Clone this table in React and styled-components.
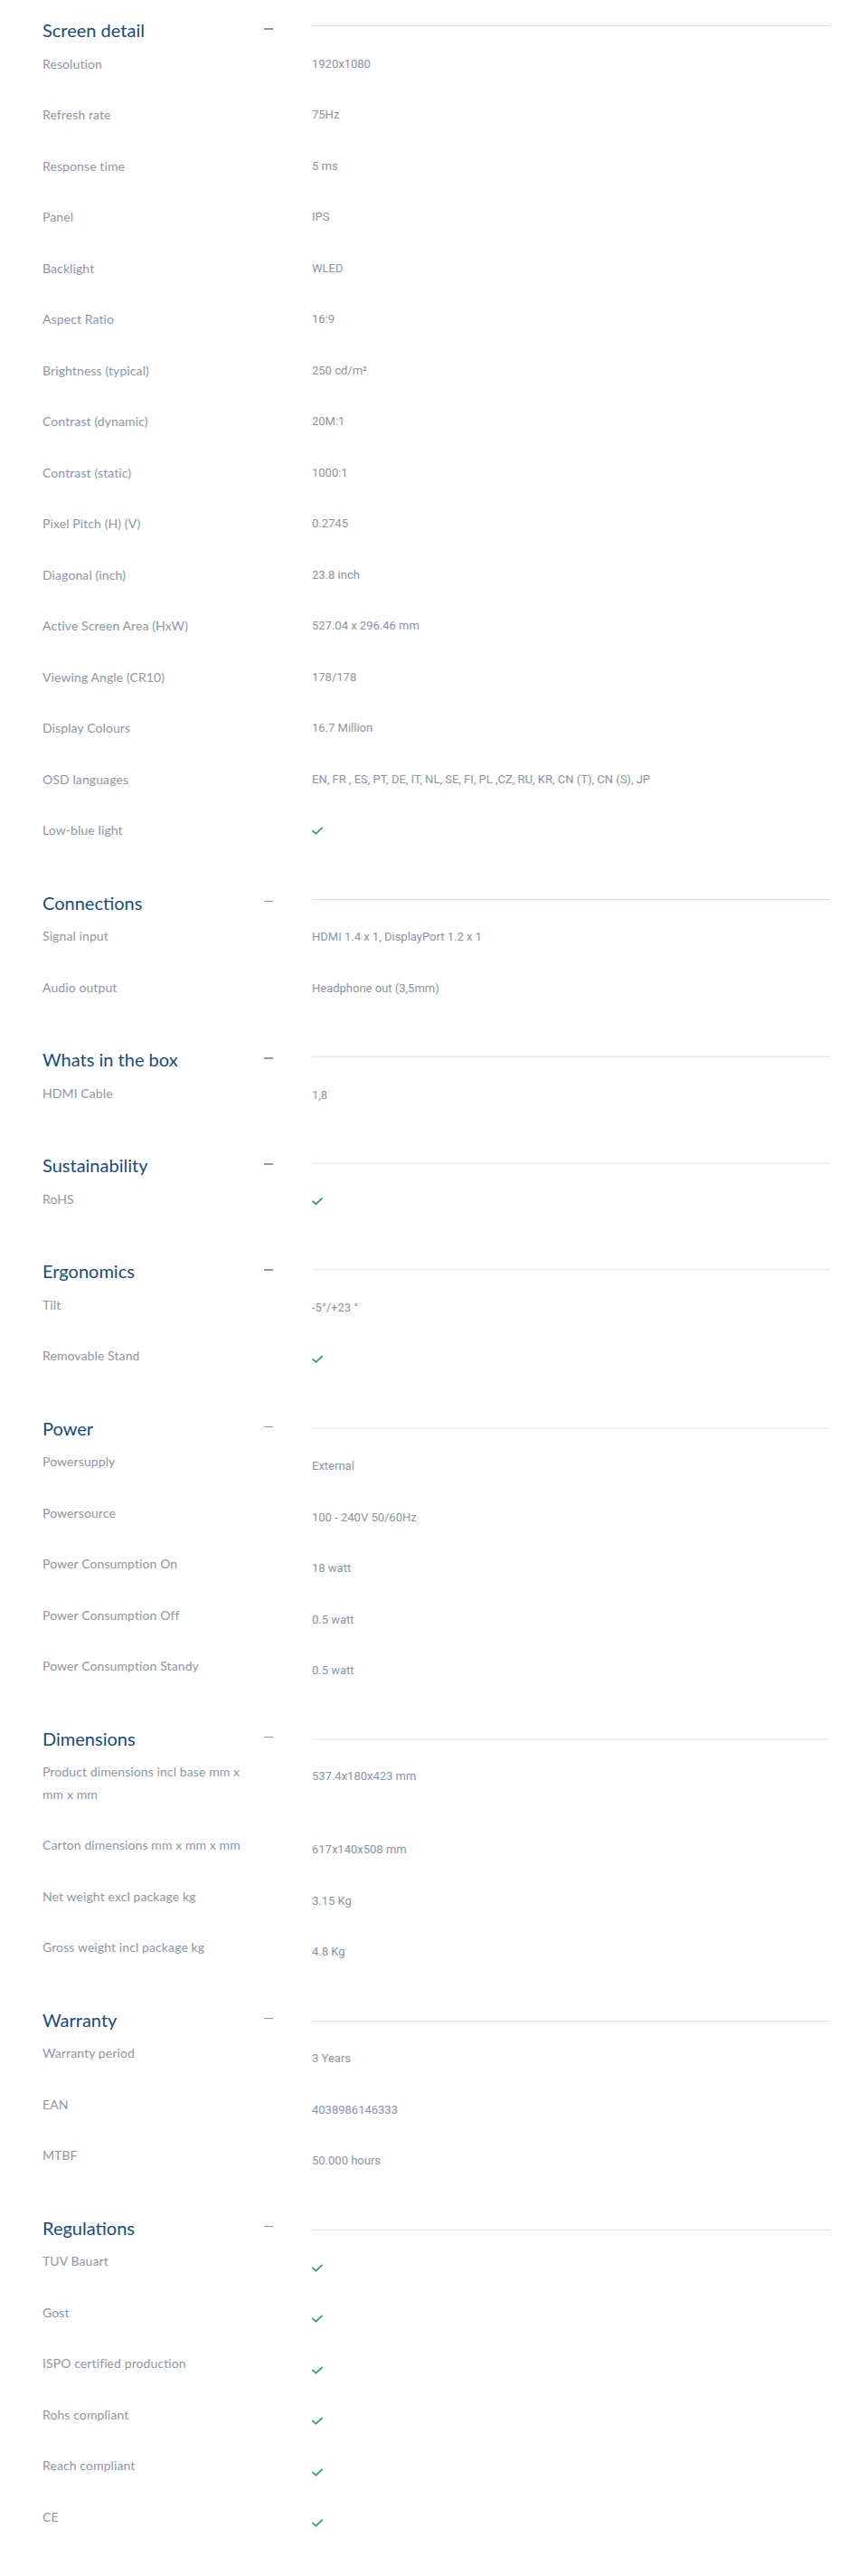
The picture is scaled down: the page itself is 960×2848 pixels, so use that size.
import React from "react";
import styled, { createGlobalStyle } from "styled-components";

const CHECK = "__check__";

const specs = [
  {
    title: "Screen detail",
    shift: 0,
    rows: [
      ["Resolution", "1920x1080"],
      ["Refresh rate", "75Hz"],
      ["Response time", "5 ms"],
      ["Panel", "IPS"],
      ["Backlight", "WLED"],
      ["Aspect Ratio", "16:9"],
      ["Brightness (typical)", "250 cd/m²"],
      ["Contrast (dynamic)", "20M:1"],
      ["Contrast (static)", "1000:1"],
      ["Pixel Pitch (H) (V)", "0.2745"],
      ["Diagonal (inch)", "23.8 inch"],
      ["Active Screen Area (HxW)", "527.04 x 296.46 mm"],
      ["Viewing Angle (CR10)", "178/178"],
      ["Display Colours", "16.7 Million"],
      ["OSD languages", "EN, FR , ES, PT, DE, IT, NL, SE, FI, PL ,CZ, RU, KR, CN (T), CN (S), JP"],
      ["Low-blue light", CHECK],
    ],
  },
  {
    title: "Connections",
    shift: 1,
    rows: [
      ["Signal input", "HDMI 1.4 x 1, DisplayPort 1.2 x 1"],
      ["Audio output", "Headphone out (3,5mm)"],
    ],
  },
  {
    title: "Whats in the box",
    shift: 1.8,
    rows: [["HDMI Cable", "1,8"]],
  },
  {
    title: "Sustainability",
    shift: 2.7,
    rows: [["RoHS", CHECK]],
  },
  {
    title: "Ergonomics",
    shift: 3.3,
    rows: [
      ["Tilt", "-5°/+23 °"],
      ["Removable Stand", CHECK],
    ],
  },
  {
    title: "Power",
    shift: 4.6,
    rows: [
      ["Powersupply", "External"],
      ["Powersource", "100 - 240V 50/60Hz"],
      ["Power Consumption On", "18 watt"],
      ["Power Consumption Off", "0.5 watt"],
      ["Power Consumption Standy", "0.5 watt"],
    ],
  },
  {
    title: "Dimensions",
    shift: 5.4,
    rows: [
      ["Product dimensions incl base mm x mm x mm", "537.4x180x423 mm"],
      ["Carton dimensions mm x mm x mm", "617x140x508 mm"],
      ["Net weight excl package kg", "3.15 Kg"],
      ["Gross weight incl package kg", "4.8 Kg"],
    ],
  },
  {
    title: "Warranty",
    shift: 6.2,
    rows: [
      ["Warranty period", "3 Years"],
      ["EAN", "4038986146333"],
      ["MTBF", "50.000 hours"],
    ],
  },
  {
    title: "Regulations",
    shift: 7,
    rows: [
      ["TUV Bauart", CHECK],
      ["Gost", CHECK],
      ["ISPO certified production", CHECK],
      ["Rohs compliant", CHECK],
      ["Reach compliant", CHECK],
      ["CE", CHECK],
    ],
  },
];

const CheckMark = () => (
  <CheckSvg viewBox="0 0 12 9" width="12" height="9">
    <polyline
      points="1,4.6 4.4,7.6 11,1.4"
      fill="none"
      stroke="#3a9d74"
      strokeWidth="1.9"
      strokeLinecap="round"
      strokeLinejoin="round"
    />
  </CheckSvg>
);

const SpecsPage = () => {
  return (
    <>
      <GlobalStyle />
      <Page>
        {specs.map((section) => (
          <Section key={section.title}>
            <SectionHead>
              <HeadLeft>
                <SectionTitle>{section.title}</SectionTitle>
                <Minus />
              </HeadLeft>
              <HeadRule $shift={section.shift} />
            </SectionHead>
            {section.rows.map(([label, value]) => (
              <SpecRow key={label}>
                <SpecLabel>{label}</SpecLabel>
                <SpecValue $shift={section.shift}>
                  {value === CHECK ? <CheckMark /> : value}
                </SpecValue>
              </SpecRow>
            ))}
          </Section>
        ))}
      </Page>
    </>
  );
};

// Styled Components
const GlobalStyle = createGlobalStyle`
  html, body {
    margin: 0;
    padding: 0;
    background: #fff;
  }
  body {
    font-family: Lato, "Open Sans", Arial, sans-serif;
  }
`;

const Page = styled.div`
  padding: 21px 42px 26px 47px;
  display: flex;
  flex-direction: column;
  gap: 35px;
`;

const Section = styled.section`
  display: flex;
  flex-direction: column;
`;

const SectionHead = styled.div`
  display: grid;
  grid-template-columns: 255px 1fr;
  column-gap: 43px;
  align-items: center;
  height: 25.5px;
`;

const HeadLeft = styled.div`
  display: flex;
  align-items: center;
  justify-content: space-between;
`;

const SectionTitle = styled.h2`
  margin: 0;
  font-family: Lato, "Open Sans", Arial, sans-serif;
  font-size: 20px;
  line-height: 25.5px;
  font-weight: 400;
  color: #174a7c;
`;

const Minus = styled.span`
  display: block;
  width: 10px;
  height: 1.5px;
  background: #8c98a8;
  transform: translateY(-2px);
`;

const HeadRule = styled.div`
  height: 1px;
  background: #dcdfe4;
  transform: translateY(${(p) => p.$shift - 5}px);
`;

const SpecRow = styled.div`
  display: grid;
  grid-template-columns: 255px 1fr;
  column-gap: 43px;
  align-items: start;
  padding: 12px 0 20px;
`;

const SpecLabel = styled.div`
  max-width: 228px;
  font-family: Lato, "Open Sans", Arial, sans-serif;
  font-size: 14px;
  line-height: 24.5px;
  color: #8b97a8;
  letter-spacing: 0.1px;
`;

const SpecValue = styled.div`
  display: flex;
  align-items: center;
  min-height: 24.5px;
  font-family: Roboto, Arial, sans-serif;
  font-size: 13px;
  line-height: 24.5px;
  color: #8895a6;
  transform: translateY(${(p) => p.$shift}px);
`;

const CheckSvg = styled.svg`
  display: block;
`;

export default SpecsPage;
